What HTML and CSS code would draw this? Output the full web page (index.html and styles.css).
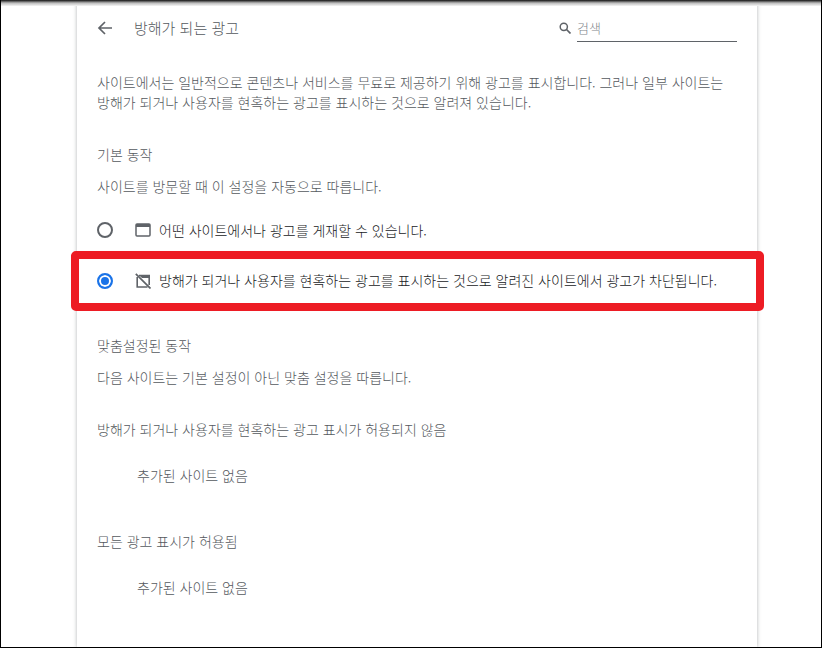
FILE: index.html
```html
<!DOCTYPE html>
<html lang="ko">
<head>
    <meta charset="UTF-8">
    <meta name="viewport" content="width=device-width, initial-scale=1.0">
    <title>방해가 되는 광고</title>
    <link rel="stylesheet" href="styles.css">
</head>
<body>
    <div class="frame">
        <div class="card">
            <div class="header">
                <svg class="back" width="16" height="16" viewBox="0 0 16 16">
                    <path d="M15 8H2.500M8 2L2 8l6 6" fill="none" stroke="#5f6368" stroke-width="1.700"/>
                </svg>
                <div class="title">방해가 되는 광고</div>
                <div class="search">
                    <svg class="search-icon" width="12" height="12" viewBox="0 0 12 12">
                        <circle cx="4.800" cy="4.800" r="3.600" fill="none" stroke="#5f6368" stroke-width="1.500"/>
                        <path d="M7.500 7.500L11.500 11.500" stroke="#5f6368" stroke-width="1.700"/>
                    </svg>
                    <div class="search-box">검색</div>
                </div>
            </div>

            <p class="intro">사이트에서는 일반적으로 콘텐츠나 서비스를 무료로 제공하기 위해 광고를 표시합니다. 그러나 일부 사이트는 방해가 되거나 사용자를 현혹하는 광고를 표시하는 것으로 알려져 있습니다.</p>

            <div class="section-title first">기본 동작</div>
            <div class="note">사이트를 방문할 때 이 설정을 자동으로 따릅니다.</div>

            <div class="option option-one">
                <span class="radio"></span>
                <svg class="option-icon" width="16" height="14" viewBox="0 0 16 14">
                    <rect x="1" y="1" width="14" height="12" rx="1" fill="none" stroke="#5f6368" stroke-width="1.500"/>
                    <rect x="1" y="1" width="14" height="3" fill="#5f6368"/>
                </svg>
                <span class="option-text">어떤 사이트에서나 광고를 게재할 수 있습니다.</span>
            </div>
            <div class="option option-two">
                <span class="radio checked"></span>
                <svg class="option-icon" width="16" height="16" viewBox="0 0 16 16">
                    <path d="M4 2.500h10.200V12M12.500 14H2.200V4" fill="none" stroke="#5f6368" stroke-width="1.600"/>
                    <path d="M4 2h10.500v3H7z" fill="#5f6368"/>
                    <path d="M0.800 0.800l14.700 14.700" stroke="#5f6368" stroke-width="1.700"/>
                </svg>
                <span class="option-text">방해가 되거나 사용자를 현혹하는 광고를 표시하는 것으로 알려진 사이트에서 광고가 차단됩니다.</span>
            </div>

            <div class="section-title custom">맞춤설정된 동작</div>
            <div class="note">다음 사이트는 기본 설정이 아닌 맞춤 설정을 따릅니다.</div>

            <div class="list-title">방해가 되거나 사용자를 현혹하는 광고 표시가 허용되지 않음</div>
            <div class="empty">추가된 사이트 없음</div>

            <div class="list-title allowed">모든 광고 표시가 허용됨</div>
            <div class="empty">추가된 사이트 없음</div>
        </div>
        <div class="highlight"></div>
    </div>
</body>
</html>
```

FILE: styles.css
```css
html, body {
    margin: 0;
    padding: 0;
    background-color: #fff;
}

body {
    font-family: "Noto Sans CJK KR", "Noto Sans", sans-serif;
    font-size: 14px;
    font-weight: 300;
    color: #55595e;
    width: 822px;
    height: 648px;
    overflow: hidden;
}

.frame {
    position: relative;
    box-sizing: border-box;
    width: 822px;
    height: 648px;
    border: solid #000;
    border-width: 0 1px 1px 1px;
    overflow: hidden;
}

/* dark strip at the top edge of the capture */
.frame::before {
    content: "";
    position: absolute;
    top: 0;
    left: 0;
    right: 0;
    height: 6px;
    background: linear-gradient(#111, #bbb 50%, #f6f6f6);
    z-index: 2;
}

.card {
    box-sizing: border-box;
    width: 680px;
    height: 647px;
    margin-left: 76px;
    padding: 0 20px;
    background-color: #fff;
    box-shadow: 0 0 4px rgba(60, 64, 67, 0.4);
}

.header {
    display: flex;
    align-items: center;
    height: 56px;
}

.back {
    margin-right: 21px;
}

.title {
    font-size: 15px;
    line-height: 20px;
    flex: 1;
}

.search {
    display: flex;
    align-items: center;
}

.search-icon {
    margin-right: 6px;
    margin-top: -1px;
}

.search-box {
    box-sizing: border-box;
    width: 160px;
    height: 26px;
    line-height: 24px;
    margin-top: 2px;
    border-bottom: 1px solid #5f6368;
    color: #80868b;
    font-size: 13px;
}

.intro {
    margin: 16px 0 0;
    line-height: 20px;
}

.section-title {
    line-height: 20px;
}

.first {
    margin-top: 32px;
}

.note {
    margin-top: 12px;
    line-height: 20px;
}

.option {
    display: flex;
    align-items: center;
    height: 20px;
    color: #202124;
}

.option-one {
    margin-top: 24px;
}

.option-two {
    margin-top: 31px;
}

.option-two .option-text {
    margin-bottom: 2px;
}

.radio {
    box-sizing: border-box;
    width: 16px;
    height: 16px;
    margin-right: 22px;
    border: 2px solid #5f6368;
    border-radius: 50%;
}

.radio.checked {
    border-color: #1a73e8;
    background-color: #1a73e8;
    box-shadow: inset 0 0 0 2px #fff;
}

.option-icon {
    margin-right: 8px;
}

.custom {
    margin-top: 44px;
}

.list-title {
    margin-top: 32px;
    line-height: 20px;
}

.allowed {
    margin-top: 46px;
}

.empty {
    margin-top: 26px;
    margin-left: 40px;
    line-height: 20px;
}

/* red annotation drawn over the page */
.highlight {
    position: absolute;
    left: 70px;
    top: 251px;
    box-sizing: border-box;
    width: 693px;
    height: 60px;
    border: 8px solid #ed1c24;
    border-radius: 5px;
}
```
